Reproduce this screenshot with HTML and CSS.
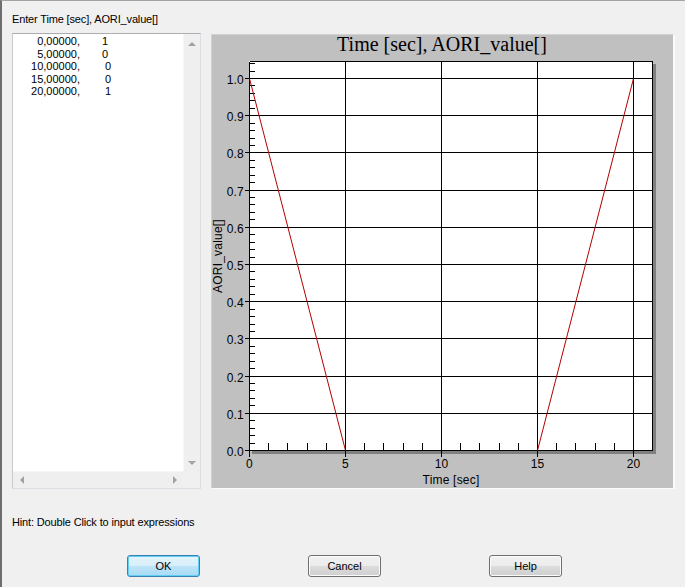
FILE: index.html
```html
<!DOCTYPE html>
<html>
<head>
<meta charset="utf-8">
<title>Enter Time</title>
<link rel="stylesheet" href="styles.css">
</head>
<body>
<div class="dialog">
  <div class="prompt">Enter Time [sec], AORI_value[]</div>
  <div class="main">
    <div class="list">
      <div class="list-body">
        <div class="row"><span class="t">0,00000,</span><span class="v">1</span></div>
        <div class="row"><span class="t">5,00000,</span><span class="v">0</span></div>
        <div class="row wide"><span class="t">10,00000,</span><span class="v">0</span></div>
        <div class="row wide"><span class="t">15,00000,</span><span class="v">0</span></div>
        <div class="row wide"><span class="t">20,00000,</span><span class="v">1</span></div>
      </div>
      <div class="vscroll"><span class="arr up"></span><span class="arr down"></span></div>
      <div class="hscroll"><span class="arr left"></span><span class="arr right"></span></div>
      <div class="corner"></div>
    </div>
    <div class="chart">
      <svg class="plot" width="462" height="454" viewBox="0 0 462 454">
        <text class="title" x="231" y="17" text-anchor="middle">Time [sec], AORI_value[]</text>
        <rect x="41" y="30" width="404" height="390" fill="#808080"/>
        <rect x="38" y="27" width="404" height="390" fill="#ffffff"/>
        <g stroke="#000" stroke-width="1" fill="none" shape-rendering="crispEdges">
          <path d="M38.5 27.5H441.5V416.5"/>
          <path d="M34 416.5H441.5M34 379.5H441.5M34 342.5H441.5M34 304.5H441.5M34 267.5H441.5M34 230.5H441.5M34 193.5H441.5M34 156.5H441.5M34 118.5H441.5M34 81.5H441.5M34 44.5H441.5"/>
          <path d="M38.5 27.5V423M134.5 27.5V423M230.5 27.5V423M326.5 27.5V423M422.5 27.5V423"/>
          <path d="M38 409.5h6M38 401.5h6M38 394.5h6M38 386.5h6M38 371.5h6M38 364.5h6M38 356.5h6M38 349.5h6M38 334.5h6M38 327.5h6M38 319.5h6M38 312.5h6M38 297.5h6M38 290.5h6M38 282.5h6M38 275.5h6M38 260.5h6M38 252.5h6M38 245.5h6M38 237.5h6M38 223.5h6M38 215.5h6M38 208.5h6M38 200.5h6M38 185.5h6M38 178.5h6M38 170.5h6M38 163.5h6M38 148.5h6M38 141.5h6M38 133.5h6M38 126.5h6M38 111.5h6M38 104.5h6M38 96.5h6M38 89.5h6M38 74.5h6M38 66.5h6M38 59.5h6M38 51.5h6M38 37.5h6M38 29.5h6"/>
          <path d="M57.5 409V417M76.5 409V417M96.5 409V417M115.5 409V417M153.5 409V417M172.5 409V417M192.5 409V417M211.5 409V417M249.5 409V417M268.5 409V417M288.5 409V417M307.5 409V417M345.5 409V417M364.5 409V417M384.5 409V417M403.5 409V417"/>
        </g>
        <path d="M38.5 44.5L134.5 416.5M326.5 416.5L422.5 44.5" stroke="#b40000" stroke-width="1" fill="none"/>
        <g class="ax" text-anchor="end">
          <text x="33" y="50">1.0</text>
          <text x="33" y="87">0.9</text>
          <text x="33" y="124">0.8</text>
          <text x="33" y="162">0.7</text>
          <text x="33" y="199">0.6</text>
          <text x="33" y="236">0.5</text>
          <text x="33" y="273">0.4</text>
          <text x="33" y="310">0.3</text>
          <text x="33" y="348">0.2</text>
          <text x="33" y="385">0.1</text>
          <text x="33" y="422">0.0</text>
        </g>
        <g class="ax" text-anchor="middle">
          <text x="38.5" y="434">0</text>
          <text x="134.5" y="434">5</text>
          <text x="230.5" y="434">10</text>
          <text x="326.5" y="434">15</text>
          <text x="422.5" y="434">20</text>
          <text x="240" y="450">Time [sec]</text>
          <text transform="translate(11 222) rotate(-90)" x="0" y="0">AORI_value[]</text>
        </g>
      </svg>
    </div>
  </div>
  <div class="hint">Hint: Double Click to input expressions</div>
  <div class="buttons">
    <button class="btn ok">OK</button>
    <button class="btn">Cancel</button>
    <button class="btn">Help</button>
  </div>
</div>
</body>
</html>
```
FILE: styles.css
```css
html, body {
  margin: 0;
  padding: 0;
  background: #f0f0f0;
  overflow: hidden;
}

.dialog {
  box-sizing: border-box;
  width: 685px;
  height: 587px;
  background: #f0f0f0;
  border-top: 1px solid #a3a3a3;
  border-left: 2px solid #6e6e6e;
  font: 11px "Liberation Sans", Arial, sans-serif;
  color: #000;
}

.prompt {
  padding: 12px 0 0 10px;
  line-height: 13px;
  letter-spacing: -0.15px;
}

.main {
  display: flex;
  align-items: flex-start;
  gap: 10px;
  margin-top: 7px;
  padding-left: 10px;
}

.list {
  box-sizing: border-box;
  width: 189px;
  height: 456px;
  border: 1px solid #dcdde2;
  border-top-color: #abadb3;
  border-left-color: #c9cacf;
  background: #fff;
  display: grid;
  grid-template-columns: 1fr 17px;
  grid-template-rows: 1fr 17px;
}

.list-body {
  padding-top: 1px;
  line-height: 12.6px;
}

.row {
  display: grid;
  grid-template-columns: 67px 28px;
}

.row.wide {
  grid-template-columns: 67px 31px;
}

.row .t,
.row .v {
  text-align: right;
}

.vscroll {
  background: #efefef;
  border-left: 1px solid #f7f7f7;
  display: flex;
  flex-direction: column;
  justify-content: space-between;
}

.hscroll {
  background: #efefef;
  border-top: 1px solid #f7f7f7;
  display: flex;
  justify-content: space-between;
}

.corner {
  background: #f0f0f0;
}

.arr {
  width: 16px;
  height: 16px;
  display: flex;
  align-items: center;
  justify-content: center;
}

.hscroll .arr {
  width: 17px;
}

.arr::before {
  content: "";
  width: 0;
  height: 0;
}

.arr.up::before {
  border-left: 4px solid transparent;
  border-right: 4px solid transparent;
  border-bottom: 4px solid #a2a2a2;
  margin-top: 3px;
}

.arr.down::before {
  border-left: 4px solid transparent;
  border-right: 4px solid transparent;
  border-top: 4px solid #a2a2a2;
}

.arr.left::before {
  border-top: 4px solid transparent;
  border-bottom: 4px solid transparent;
  border-right: 4px solid #a2a2a2;
}

.arr.right::before {
  border-top: 4px solid transparent;
  border-bottom: 4px solid transparent;
  border-left: 4px solid #a2a2a2;
}

.chart {
  width: 462px;
  height: 454px;
  margin-top: 1px;
  background: #c0c0c0;
  box-shadow: inset 1px 1px 0 #d2d2d2, 2px 1px 0 #fbfbfb;
}

.plot {
  display: block;
}

.title {
  font: 20px "Liberation Serif", "Times New Roman", serif;
  fill: #000;
}

.ax {
  font: 12px "Liberation Sans", Arial, sans-serif;
  fill: #000;
  letter-spacing: 0.2px;
}

.hint {
  margin-top: 27px;
  padding-left: 10px;
  line-height: 13px;
  letter-spacing: -0.15px;
}

.buttons {
  display: flex;
  gap: 108px;
  margin-top: 26px;
  padding-left: 125px;
}

.btn {
  box-sizing: border-box;
  width: 73px;
  height: 22px;
  margin: 0;
  padding: 0;
  font: 11px "Liberation Sans", Arial, sans-serif;
  color: #000;
  border: 1px solid #707070;
  border-radius: 3px;
  background: linear-gradient(#f2f2f2 0%, #ebebeb 50%, #dddddd 50%, #cfcfcf 100%);
  box-shadow: inset 0 0 0 1px #fbfbfb;
}

.btn.ok {
  border-color: #3c7fb1;
  background: linear-gradient(#e5f4fc 0%, #d6eefb 50%, #bde4f8 50%, #a9daf5 100%);
  box-shadow: inset 0 0 0 1px #5fd0f4;
}
```
